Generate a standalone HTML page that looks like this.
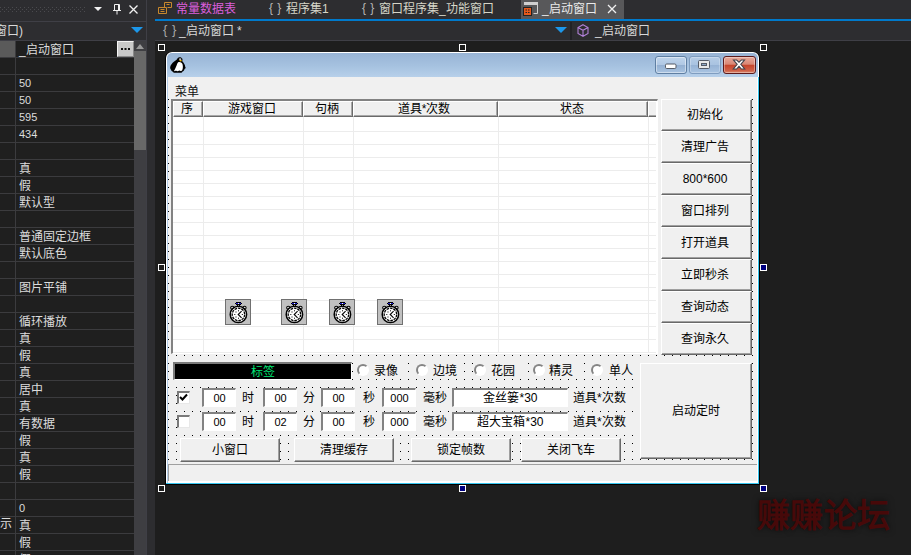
<!DOCTYPE html>
<html lang="zh-CN"><head><meta charset="utf-8"><title>form designer</title>
<style>
*{box-sizing:border-box;margin:0;padding:0}
html,body{width:911px;height:555px;overflow:hidden;background:#1e1e1e}
body{position:relative;font-family:"Liberation Sans",sans-serif;font-size:12px;line-height:14px;color:#000}
.a{position:absolute}
.t{position:absolute;white-space:nowrap;line-height:14px;height:14px}
/* left panel */
#lp{left:0;top:0;width:155px;height:555px;background:#2d2d30}
.row{position:absolute;left:0;width:134px;height:17px;border-bottom:1px solid #3b3b3e;background:#1f1f1f;color:#dcdcdc}
.row i{position:absolute;left:0;top:0;width:16px;height:16px;border-right:1px solid #3b3b3e;font-style:normal}
.row b{position:absolute;left:19px;top:2px;font-weight:normal;line-height:14px;white-space:nowrap}
/* tabs */
.tab{position:absolute;top:0;height:19px;color:#d6d6d6;line-height:14px}
/* form */
.btn{position:absolute;background:#f0f0f0;border-top:1px solid #fff;border-left:1px solid #fff;border-right:1px solid #696969;border-bottom:1px solid #696969;text-align:center}
.btn:after{content:"";position:absolute;left:0;top:0;right:0;bottom:0;border-right:1px solid #a0a0a0;border-bottom:1px solid #a0a0a0}
.btn span{position:absolute;left:0;right:0;text-align:center;line-height:14px}
.tb{position:absolute;background:#fff;border-top:2px solid #828282;border-left:2px solid #828282;border-right:1px solid #fff;border-bottom:1px solid #fff;text-align:center;line-height:14px;padding-top:1px}
.cov{position:absolute;background:#f0f0f0}
.lab{position:absolute;line-height:14px;white-space:nowrap}
.hd{position:absolute;top:101px;height:16px;background:#f0f0f0;border-top:1px solid #fff;border-left:1px solid #fff;border-right:1px solid #6a6a6a;border-bottom:1px solid #6a6a6a;text-align:center;line-height:14px;padding-right:3px;box-shadow:inset -1px -1px 0 #a8a8a8}
.hd.last{border-right:none;box-shadow:inset 0 -1px 0 #a8a8a8}
.hnd{position:absolute;width:7px;height:7px;border:1px solid #fff;background:#1e1e1e}
.hnd.n{background:#000080}
.rad{position:absolute;width:12px;height:12px;border-radius:50%;background:#fff;border:2px solid;border-color:#858585 #fff #fff #858585;transform:rotate(0deg)}
.tm{position:absolute;top:299px;width:26px;height:26px;background:#c0c0c0;border:1px solid #707070}
</style></head>
<body>
<div id="lp" class="a">
<svg class="a" style="left:0;top:7px" width="86" height="5"><defs><pattern id="gp" width="4" height="4" patternUnits="userSpaceOnUse"><rect x="0" y="0" width="1" height="1" fill="#4a4a4e"/><rect x="2" y="2" width="1" height="1" fill="#4a4a4e"/></pattern></defs><rect width="86" height="5" fill="url(#gp)"/></svg>
<svg class="a" style="left:93px;top:3px" width="48" height="14" viewBox="0 0 48 14"><path d="M1 4h8l-4 4z" fill="#f1f1f1"/><path d="M21.5 1.5h5v6M21.5 1.5v6M20 7.5h8M24 7.5v4M25.5 2v5" stroke="#f1f1f1" stroke-width="1" fill="none"/><path d="M36.5 2.5l8 8M44.5 2.5l-8 8" stroke="#f1f1f1" stroke-width="1.3" fill="none"/></svg>
<div class="a" style="left:0;top:21px;width:146px;height:1px;background:#3f3f46"></div>
<div class="t" style="left:-5px;top:24px;color:#d8d8d8">窗口)</div>
<svg class="a" style="left:131px;top:27px" width="12" height="6"><path d="M0 0h12l-6 6z" fill="#1c97ea"/></svg>
<div class="a" style="left:0;top:40px;width:146px;height:1px;background:#3f3f46"></div>
<div class="a" style="left:146px;top:0;width:1px;height:555px;background:#3f3f46"></div>
<div class="row" style="top:41px"><i style="background:#5a5a5a"></i><b>_启动窗口</b></div>
<div class="row" style="top:58px"><i></i><b></b></div>
<div class="row" style="top:75px"><i></i><b style="font-size:11px;top:1px">50</b></div>
<div class="row" style="top:92px"><i></i><b style="font-size:11px;top:1px">50</b></div>
<div class="row" style="top:109px"><i></i><b style="font-size:11px;top:1px">595</b></div>
<div class="row" style="top:126px"><i></i><b style="font-size:11px;top:1px">434</b></div>
<div class="row" style="top:143px"><i></i><b></b></div>
<div class="row" style="top:160px"><i></i><b>真</b></div>
<div class="row" style="top:177px"><i></i><b>假</b></div>
<div class="row" style="top:194px"><i></i><b>默认型</b></div>
<div class="row" style="top:211px"><i></i><b></b></div>
<div class="row" style="top:228px"><i></i><b>普通固定边框</b></div>
<div class="row" style="top:245px"><i></i><b>默认底色</b></div>
<div class="row" style="top:262px"><i></i><b></b></div>
<div class="row" style="top:279px"><i></i><b>图片平铺</b></div>
<div class="row" style="top:296px"><i></i><b></b></div>
<div class="row" style="top:313px"><i></i><b>循环播放</b></div>
<div class="row" style="top:330px"><i></i><b>真</b></div>
<div class="row" style="top:347px"><i></i><b>假</b></div>
<div class="row" style="top:364px"><i></i><b>真</b></div>
<div class="row" style="top:381px"><i></i><b>居中</b></div>
<div class="row" style="top:398px"><i></i><b>真</b></div>
<div class="row" style="top:415px"><i></i><b>有数据</b></div>
<div class="row" style="top:432px"><i></i><b>假</b></div>
<div class="row" style="top:449px"><i></i><b>真</b></div>
<div class="row" style="top:466px"><i></i><b>假</b></div>
<div class="row" style="top:483px"><i></i><b></b></div>
<div class="row" style="top:500px"><i></i><b style="font-size:11px;top:1px">0</b></div>
<div class="row" style="top:517px"><i>示</i><b>真</b></div>
<div class="row" style="top:534px"><i></i><b>假</b></div>
<div class="row" style="top:551px"><i></i><b>假</b></div>
<div class="a" style="left:117px;top:41px;width:17px;height:16px;background:#c9c9c9;border-top:1px solid #f4f4f4;border-left:1px solid #f4f4f4;border-right:1px solid #8a8a8a;border-bottom:1px solid #8a8a8a"></div>
<svg class="a" style="left:121px;top:48px" width="9" height="2"><rect x="0" width="2" height="2" fill="#111"/><rect x="3.5" width="2" height="2" fill="#111"/><rect x="7" width="2" height="2" fill="#111"/></svg>
<div class="a" style="left:134px;top:41px;width:12px;height:514px;background:#3e3e42"></div>
<div class="a" style="left:134px;top:51px;width:12px;height:99px;background:#686868"></div>
<svg class="a" style="left:136px;top:44px" width="8" height="5"><path d="M0 5h8l-4-5z" fill="#999"/></svg>
</div>
<div class="a" style="left:155px;top:0;width:756px;height:19px;background:#2d2d30"></div>
<div class="a" style="left:521px;top:0;width:103px;height:19px;background:#58585a"></div>
<div class="a" style="left:155px;top:19px;width:756px;height:2px;background:#007acc"></div>
<div class="a" style="left:155px;top:21px;width:756px;height:19px;background:#2d2d30"></div>
<div class="a" style="left:155px;top:40px;width:756px;height:1px;background:#3f3f46"></div>
<svg class="a" style="left:158px;top:2px" width="14" height="12" viewBox="0 0 14 12"><path d="M6.5 0.5h7v5h-4M0.5 5.5h8v6h-8zM8.5 2.5h3M2.500000 7.500000h4M2.500000 9.500000h4M6.500000 0.500000v5" stroke="#c8882c" fill="none"/></svg>
<div class="t" style="left:176px;top:2px;color:#dc5fdc">常量数据表</div>
<div class="t" style="left:269px;top:1px;color:#b8b8b8;word-spacing:1px">{ }</div><div class="t" style="left:286px;top:2px;color:#d6d6c8">程序集1</div>
<div class="t" style="left:362px;top:1px;color:#b8b8b8;word-spacing:1px">{ }</div><div class="t" style="left:379px;top:2px;color:#d6d6c8">窗口程序集_功能窗口</div>
<svg class="a" style="left:523px;top:1px" width="16" height="15" viewBox="0 0 16 15"><path d="M1.5 1.5h13v11h-4" stroke="#d0d0d0" fill="none"/><rect x="1" y="1" width="14" height="3" fill="#d0d0d0"/><rect x="0.5" y="6.5" width="8" height="8" fill="#e8591c" stroke="#222"/><path d="M2.5 9h1.5M5 9h1.5M2.5 11.5h1.5M5 11.5h1.5" stroke="#222" stroke-width="1"/></svg>
<div class="t" style="left:542px;top:2px;color:#eaeaea">_启动窗口</div>
<svg class="a" style="left:607px;top:4px" width="10" height="10"><path d="M1 1l8 8M9 1l-8 8" stroke="#f0f0f0" stroke-width="1.3"/></svg>
<div class="t" style="left:163px;top:23px;color:#a8a8a8;font-size:13px;word-spacing:1px">{ }</div><div class="t" style="left:179px;top:24px;color:#d8d8d8">_启动窗口 *</div>
<svg class="a" style="left:555px;top:27px" width="12" height="6"><path d="M0 0h12l-6 6z" fill="#1c97ea"/></svg>
<div class="a" style="left:570px;top:22px;width:2px;height:18px;background:#222225"></div>
<svg class="a" style="left:577px;top:24px" width="12" height="13" viewBox="0 0 12 13"><path d="M6 0.7l5 2.8v6l-5 2.8l-5-2.8v-6zM1 3.5l5 2.8l5-2.8M6 6.3v6" stroke="#b180d7" fill="none" stroke-width="1.1"/></svg>
<div class="t" style="left:595px;top:24px;color:#d8d8d8">_启动窗口</div>
<div class="hnd" style="left:158px;top:44px"></div>
<div class="hnd" style="left:459px;top:44px"></div>
<div class="hnd" style="left:760px;top:44px"></div>
<div class="hnd" style="left:158px;top:264px"></div>
<div class="hnd n" style="left:760px;top:264px"></div>
<div class="hnd" style="left:158px;top:485px"></div>
<div class="hnd n" style="left:459px;top:485px"></div>
<div class="hnd n" style="left:760px;top:485px"></div>
<div class="a" style="left:165px;top:52px;width:595px;height:433px;background:#000;border-radius:6px 6px 0 0"></div>
<div class="a" style="left:166px;top:52px;width:593px;height:432px;background:#fff;border-radius:6px 6px 0 0"></div>
<div class="a" style="left:758px;top:77px;width:1px;height:407px;background:#36c6f0"></div>
<div class="a" style="left:166px;top:483px;width:593px;height:1px;background:#36c6f0"></div>
<div class="a" style="left:167px;top:53px;width:591px;height:24px;border-radius:5px 5px 0 0;background:linear-gradient(#98b4d5,#a6c2e0 55%,#b7d0ea)"></div>
<div class="a" style="left:167px;top:77px;width:1px;height:406px;background:#b4cce8"></div>
<div class="a" style="left:168px;top:77px;width:589px;height:404px;background:#f0f0f0"></div>
<svg class="a" style="left:168px;top:99px" width="589" height="365"><defs><pattern id="dp" width="8" height="8" patternUnits="userSpaceOnUse"><rect width="1" height="1" fill="#000"/></pattern></defs><rect width="589" height="365" fill="url(#dp)"/></svg>
<svg class="a" style="left:170px;top:57px" width="16" height="16" viewBox="0 0 16 16"><path d="M9 0.3c1.2-0.3 3 0.3 3.4 1.6c0.3 0.9-0.2 1.5-0.1 2.3c1.6 1.6 2.8 3.6 2.9 5.6c0.4 0.5 0.6 1 0.3 1.5c-0.3 0.5-0.8 0.4-1 0.9c-0.3 1.2-1 1.9-2 2.3c-0.2 0.9-0.9 1.2-1.9 1.2h-6c-0.9 0-1.3-0.4-1.6-1c-1-0.3-1.7-1-2-2c-0.8-0.8-1-2-0.7-3c0.2-1.1 0.9-1.8 1.4-2.6c1.2-1.7 3-3 4.900000-4.300000c0.7-0.900000 1.300000-2.200000 2.400000-2.500000z" fill="#000"/><path d="M8.6 5c1.9-0.4 3.600000 0.700000 4 2.500000c0.400000 1.900000 0.400000 3.900000-0.300000 5.600000c-0.300000 0.800000-0.900000 1.100000-1.600000 1l-1.400000-0.500000l-1.600000 0.600000c-0.700000-0.200000-1.100000-0.600000-1.900000-0.400000l-1.900000 0.500000c1-2.200000 2-4.300000 2.900000-6.400000c0.400000-1 0.800000-2.300000 1.800000-2.900000z" fill="#fff"/><path d="M9.400000 2.900000h2.400000l-0.600000 1.500000l-1.500000-0.200000z" fill="#f2b705"/><path d="M9.200000 1.500000h2.000000v1.300000h-2.000000z" fill="#eee"/></svg>
<div class="a" style="left:655px;top:56px;width:32px;height:18px;border:1px solid #5f7fa3;border-radius:3px;background:linear-gradient(#c0d5ec,#b0c8e4 48%,#94b0d2 52%,#a9c4e2);box-shadow:inset 0 0 0 1px rgba(255,255,255,.45)"></div>
<div class="a" style="left:689px;top:56px;width:32px;height:18px;border:1px solid #7f9dc0;border-radius:3px;background:linear-gradient(#b5cce6,#a9c3e1 48%,#97b3d5 52%,#a9c4e2);box-shadow:inset 0 0 0 1px rgba(255,255,255,.25)"></div>
<div class="a" style="left:723px;top:56px;width:33px;height:18px;border:1px solid #5c1a1c;border-radius:3px;background:linear-gradient(#e8aa9c,#d98775 45%,#c6452c 52%,#cf6148 85%,#d98a70);box-shadow:inset 0 0 0 1px rgba(255,255,255,.35)"></div>
<svg class="a" style="left:665px;top:63px" width="12" height="7"><rect x="0.5" y="1" width="10.5" height="4.5" rx="1.2" fill="#fff" stroke="#555b66"/></svg>
<svg class="a" style="left:698px;top:60px" width="13" height="10"><rect x="0.5" y="0.5" width="11" height="8" rx="1" fill="#e8e8e8" stroke="#555b66"/><rect x="3.5" y="3.5" width="5" height="2" fill="#8fa8c6" stroke="#555b66"/></svg>
<svg class="a" style="left:732px;top:59px" width="14" height="11" viewBox="0 0 14 11"><path d="M1.5 1h3.200000l2.300000 2.300000l2.300000-2.300000h3.200000l-3.700000 4.300000l3.900000 4.700000h-3.300000l-2.400000-2.700000l-2.400000 2.700000h-3.300000l3.900000-4.700000z" fill="#fff" stroke="#43434b" stroke-width="1.1"/></svg>
<div class="lab" style="left:175px;top:85px;color:#101010">菜单</div>
<div class="a" style="left:171px;top:99px;width:487px;height:255px;background:#fff;border-top:2px solid #828282;border-left:2px solid #828282;border-right:1px solid #fff;border-bottom:1px solid #fff"></div>
<svg class="a" style="left:173px;top:117px" width="483" height="236" fill="#ececec"><rect x="0" y="14" width="483" height="1"/><rect x="0" y="27" width="483" height="1"/><rect x="0" y="40" width="483" height="1"/><rect x="0" y="53" width="483" height="1"/><rect x="0" y="66" width="483" height="1"/><rect x="0" y="79" width="483" height="1"/><rect x="0" y="92" width="483" height="1"/><rect x="0" y="105" width="483" height="1"/><rect x="0" y="118" width="483" height="1"/><rect x="0" y="131" width="483" height="1"/><rect x="0" y="144" width="483" height="1"/><rect x="0" y="157" width="483" height="1"/><rect x="0" y="170" width="483" height="1"/><rect x="0" y="183" width="483" height="1"/><rect x="0" y="196" width="483" height="1"/><rect x="0" y="209" width="483" height="1"/><rect x="0" y="222" width="483" height="1"/><rect x="0" y="235" width="483" height="1"/><rect x="30" y="0" width="1" height="236"/><rect x="130" y="0" width="1" height="236"/><rect x="180" y="0" width="1" height="236"/><rect x="325" y="0" width="1" height="236"/><rect x="475" y="0" width="1" height="236"/></svg>
<div class="hd" style="left:173px;width:30px">序</div>
<div class="hd" style="left:203px;width:100px">游戏窗口</div>
<div class="hd" style="left:303px;width:50px">句柄</div>
<div class="hd" style="left:353px;width:145px">道具*次数</div>
<div class="hd" style="left:498px;width:150px">状态</div>
<div class="hd last" style="left:648px;width:8px"></div>
<div class="tm" style="left:225px"><svg width="24" height="24" viewBox="1 1 24 24" style="position:absolute;left:0;top:0"><g shape-rendering="crispEdges"><rect x="11" y="3" width="5" height="1" fill="#000"/><rect x="10" y="4" width="7" height="1" fill="#000"/><rect x="11" y="4" width="5" height="1" fill="#2020d0"/><rect x="13" y="4" width="1" height="1" fill="#fff"/><rect x="11" y="5" width="5" height="1" fill="#000"/><rect x="12" y="6" width="3" height="3" fill="#000"/><rect x="13" y="6" width="1" height="3" fill="#fff"/></g><circle cx="7.300000" cy="8.800000" r="1.600000" fill="#fff" stroke="#000" stroke-width="1.100000"/><circle cx="19.500000" cy="8.800000" r="1.600000" fill="#fff" stroke="#000" stroke-width="1.100000"/><path d="M8.500000 10l1.200000 1M18.300000 10l-1.200000 1" stroke="#000"/><circle cx="13.400000" cy="15.400000" r="8.200000" fill="#fff" stroke="#000" stroke-width="1.500000"/><circle cx="13.400000" cy="15.400000" r="6.200000" fill="none" stroke="#000" stroke-width="1.300000" stroke-dasharray="2.600000 0.900000"/><path d="M16.600000 12.200000l-3.400000 3.300000l3.400000 3.300000" stroke="#000" fill="none" stroke-width="1.100000"/><g fill="#000"><rect x="10.500000" y="12.500000" width="1" height="1"/><rect x="13" y="11.300000" width="1" height="1"/><rect x="9.300000" y="15" width="1" height="1"/><rect x="10.500000" y="17.500000" width="1" height="1"/><rect x="13" y="18.700000" width="1" height="1"/><rect x="16.800000" y="15" width="1" height="1"/></g></svg></div>
<div class="tm" style="left:281px"><svg width="24" height="24" viewBox="1 1 24 24" style="position:absolute;left:0;top:0"><g shape-rendering="crispEdges"><rect x="11" y="3" width="5" height="1" fill="#000"/><rect x="10" y="4" width="7" height="1" fill="#000"/><rect x="11" y="4" width="5" height="1" fill="#2020d0"/><rect x="13" y="4" width="1" height="1" fill="#fff"/><rect x="11" y="5" width="5" height="1" fill="#000"/><rect x="12" y="6" width="3" height="3" fill="#000"/><rect x="13" y="6" width="1" height="3" fill="#fff"/></g><circle cx="7.300000" cy="8.800000" r="1.600000" fill="#fff" stroke="#000" stroke-width="1.100000"/><circle cx="19.500000" cy="8.800000" r="1.600000" fill="#fff" stroke="#000" stroke-width="1.100000"/><path d="M8.500000 10l1.200000 1M18.300000 10l-1.200000 1" stroke="#000"/><circle cx="13.400000" cy="15.400000" r="8.200000" fill="#fff" stroke="#000" stroke-width="1.500000"/><circle cx="13.400000" cy="15.400000" r="6.200000" fill="none" stroke="#000" stroke-width="1.300000" stroke-dasharray="2.600000 0.900000"/><path d="M16.600000 12.200000l-3.400000 3.300000l3.400000 3.300000" stroke="#000" fill="none" stroke-width="1.100000"/><g fill="#000"><rect x="10.500000" y="12.500000" width="1" height="1"/><rect x="13" y="11.300000" width="1" height="1"/><rect x="9.300000" y="15" width="1" height="1"/><rect x="10.500000" y="17.500000" width="1" height="1"/><rect x="13" y="18.700000" width="1" height="1"/><rect x="16.800000" y="15" width="1" height="1"/></g></svg></div>
<div class="tm" style="left:329px"><svg width="24" height="24" viewBox="1 1 24 24" style="position:absolute;left:0;top:0"><g shape-rendering="crispEdges"><rect x="11" y="3" width="5" height="1" fill="#000"/><rect x="10" y="4" width="7" height="1" fill="#000"/><rect x="11" y="4" width="5" height="1" fill="#2020d0"/><rect x="13" y="4" width="1" height="1" fill="#fff"/><rect x="11" y="5" width="5" height="1" fill="#000"/><rect x="12" y="6" width="3" height="3" fill="#000"/><rect x="13" y="6" width="1" height="3" fill="#fff"/></g><circle cx="7.300000" cy="8.800000" r="1.600000" fill="#fff" stroke="#000" stroke-width="1.100000"/><circle cx="19.500000" cy="8.800000" r="1.600000" fill="#fff" stroke="#000" stroke-width="1.100000"/><path d="M8.500000 10l1.200000 1M18.300000 10l-1.200000 1" stroke="#000"/><circle cx="13.400000" cy="15.400000" r="8.200000" fill="#fff" stroke="#000" stroke-width="1.500000"/><circle cx="13.400000" cy="15.400000" r="6.200000" fill="none" stroke="#000" stroke-width="1.300000" stroke-dasharray="2.600000 0.900000"/><path d="M16.600000 12.200000l-3.400000 3.300000l3.400000 3.300000" stroke="#000" fill="none" stroke-width="1.100000"/><g fill="#000"><rect x="10.500000" y="12.500000" width="1" height="1"/><rect x="13" y="11.300000" width="1" height="1"/><rect x="9.300000" y="15" width="1" height="1"/><rect x="10.500000" y="17.500000" width="1" height="1"/><rect x="13" y="18.700000" width="1" height="1"/><rect x="16.800000" y="15" width="1" height="1"/></g></svg></div>
<div class="tm" style="left:377px"><svg width="24" height="24" viewBox="1 1 24 24" style="position:absolute;left:0;top:0"><g shape-rendering="crispEdges"><rect x="11" y="3" width="5" height="1" fill="#000"/><rect x="10" y="4" width="7" height="1" fill="#000"/><rect x="11" y="4" width="5" height="1" fill="#2020d0"/><rect x="13" y="4" width="1" height="1" fill="#fff"/><rect x="11" y="5" width="5" height="1" fill="#000"/><rect x="12" y="6" width="3" height="3" fill="#000"/><rect x="13" y="6" width="1" height="3" fill="#fff"/></g><circle cx="7.300000" cy="8.800000" r="1.600000" fill="#fff" stroke="#000" stroke-width="1.100000"/><circle cx="19.500000" cy="8.800000" r="1.600000" fill="#fff" stroke="#000" stroke-width="1.100000"/><path d="M8.500000 10l1.200000 1M18.300000 10l-1.200000 1" stroke="#000"/><circle cx="13.400000" cy="15.400000" r="8.200000" fill="#fff" stroke="#000" stroke-width="1.500000"/><circle cx="13.400000" cy="15.400000" r="6.200000" fill="none" stroke="#000" stroke-width="1.300000" stroke-dasharray="2.600000 0.900000"/><path d="M16.600000 12.200000l-3.400000 3.300000l3.400000 3.300000" stroke="#000" fill="none" stroke-width="1.100000"/><g fill="#000"><rect x="10.500000" y="12.500000" width="1" height="1"/><rect x="13" y="11.300000" width="1" height="1"/><rect x="9.300000" y="15" width="1" height="1"/><rect x="10.500000" y="17.500000" width="1" height="1"/><rect x="13" y="18.700000" width="1" height="1"/><rect x="16.800000" y="15" width="1" height="1"/></g></svg></div>
<div class="btn" style="left:661px;top:99px;width:91px;height:32px"><span style="top:8px;left:-3px">初始化</span></div>
<div class="btn" style="left:661px;top:131px;width:91px;height:32px"><span style="top:8px;left:-3px">清理广告</span></div>
<div class="btn" style="left:661px;top:163px;width:91px;height:32px"><span style="top:8px;left:-3px" style="font-size:11px">800*600</span></div>
<div class="btn" style="left:661px;top:195px;width:91px;height:32px"><span style="top:8px;left:-3px">窗口排列</span></div>
<div class="btn" style="left:661px;top:227px;width:91px;height:32px"><span style="top:8px;left:-3px">打开道具</span></div>
<div class="btn" style="left:661px;top:259px;width:91px;height:32px"><span style="top:8px;left:-3px">立即秒杀</span></div>
<div class="btn" style="left:661px;top:291px;width:91px;height:32px"><span style="top:8px;left:-3px">查询动态</span></div>
<div class="btn" style="left:661px;top:323px;width:91px;height:32px"><span style="top:8px;left:-3px">查询永久</span></div>
<div class="btn" style="left:640px;top:363px;width:112px;height:96px"><span style="top:40px">启动定时</span></div>
<div class="a" style="left:173px;top:362px;width:179px;height:18px;background:#000;border-top:2px solid #7a7a7a;border-left:2px solid #7a7a7a;border-right:1px solid #fff;border-bottom:1px solid #fff;color:#00e676;text-align:center;line-height:14px;padding-top:1px">标签</div>
<div class="cov" style="left:353px;top:362px;width:55px;height:17px"></div>
<div class="rad" style="left:357px;top:364px"></div>
<div class="lab" style="left:374px;top:364px">录像</div>
<div class="cov" style="left:409px;top:362px;width:55px;height:17px"></div>
<div class="rad" style="left:415.5px;top:364px"></div>
<div class="lab" style="left:432.5px;top:364px">边境</div>
<div class="cov" style="left:473px;top:362px;width:55px;height:17px"></div>
<div class="rad" style="left:474px;top:364px"></div>
<div class="lab" style="left:491px;top:364px">花园</div>
<div class="cov" style="left:530px;top:362px;width:54px;height:17px"></div>
<div class="rad" style="left:532.5px;top:364px"></div>
<div class="lab" style="left:549px;top:364px">精灵</div>
<div class="cov" style="left:589px;top:362px;width:49px;height:17px"></div>
<div class="rad" style="left:591px;top:364px"></div>
<div class="lab" style="left:608.5px;top:364px">单人</div>
<div class="cov" style="left:177px;top:388px;width:461px;height:22px"></div>
<div class="a" style="left:177px;top:391px;width:13px;height:13px;background:#fff;border-top:2px solid #7a7a7a;border-left:2px solid #7a7a7a;border-right:1px solid #e8e8e8;border-bottom:1px solid #e8e8e8"></div>
<svg class="a" style="left:179px;top:393px" width="9" height="9"><path d="M1 4l2.500000 2.500000l4.500000-5" stroke="#000" stroke-width="2" fill="none"/></svg>
<div class="tb" style="left:202px;top:388px;width:34px;height:19px;font-size:11px">00</div>
<div class="tb" style="left:263px;top:388px;width:34px;height:19px;font-size:11px">00</div>
<div class="tb" style="left:321px;top:388px;width:34px;height:19px;font-size:11px">00</div>
<div class="tb" style="left:382px;top:388px;width:34px;height:19px;font-size:11px">000</div>
<div class="tb" style="left:452px;top:388px;width:116px;height:19px">金丝篓*30</div>
<div class="lab" style="left:242px;top:391px">时</div>
<div class="lab" style="left:303px;top:391px">分</div>
<div class="lab" style="left:363px;top:391px">秒</div>
<div class="lab" style="left:423px;top:391px">毫秒</div>
<div class="lab" style="left:573px;top:391px">道具*次数</div>
<div class="cov" style="left:177px;top:412px;width:461px;height:22px"></div>
<div class="a" style="left:177px;top:415px;width:13px;height:13px;background:#fff;border-top:2px solid #7a7a7a;border-left:2px solid #7a7a7a;border-right:1px solid #e8e8e8;border-bottom:1px solid #e8e8e8"></div>
<div class="tb" style="left:202px;top:412px;width:34px;height:19px;font-size:11px">00</div>
<div class="tb" style="left:263px;top:412px;width:34px;height:19px;font-size:11px">02</div>
<div class="tb" style="left:321px;top:412px;width:34px;height:19px;font-size:11px">00</div>
<div class="tb" style="left:382px;top:412px;width:34px;height:19px;font-size:11px">000</div>
<div class="tb" style="left:452px;top:412px;width:116px;height:19px">超大宝箱*30</div>
<div class="lab" style="left:242px;top:415px">时</div>
<div class="lab" style="left:303px;top:415px">分</div>
<div class="lab" style="left:363px;top:415px">秒</div>
<div class="lab" style="left:423px;top:415px">毫秒</div>
<div class="lab" style="left:573px;top:415px">道具*次数</div>
<div class="btn" style="left:180px;top:438px;width:100px;height:24px"><span style="top:4px">小窗口</span></div>
<div class="btn" style="left:294px;top:438px;width:100px;height:24px"><span style="top:4px">清理缓存</span></div>
<div class="btn" style="left:411px;top:438px;width:100px;height:24px"><span style="top:4px">锁定帧数</span></div>
<div class="btn" style="left:521px;top:438px;width:100px;height:24px"><span style="top:4px">关闭飞车</span></div>
<div class="a" style="left:168px;top:464px;width:589px;height:17px;background:#f0f0f0;border-top:1px solid #a0a0a0;border-left:1px solid #a0a0a0"></div>
<div class="t" style="left:757px;top:497px;height:38px;line-height:38px;font-size:33px;letter-spacing:0.3px;font-weight:bold;color:#470909;text-shadow:0 0 6px rgba(0,0,0,.6)">赚赚论坛</div>
</body></html>
